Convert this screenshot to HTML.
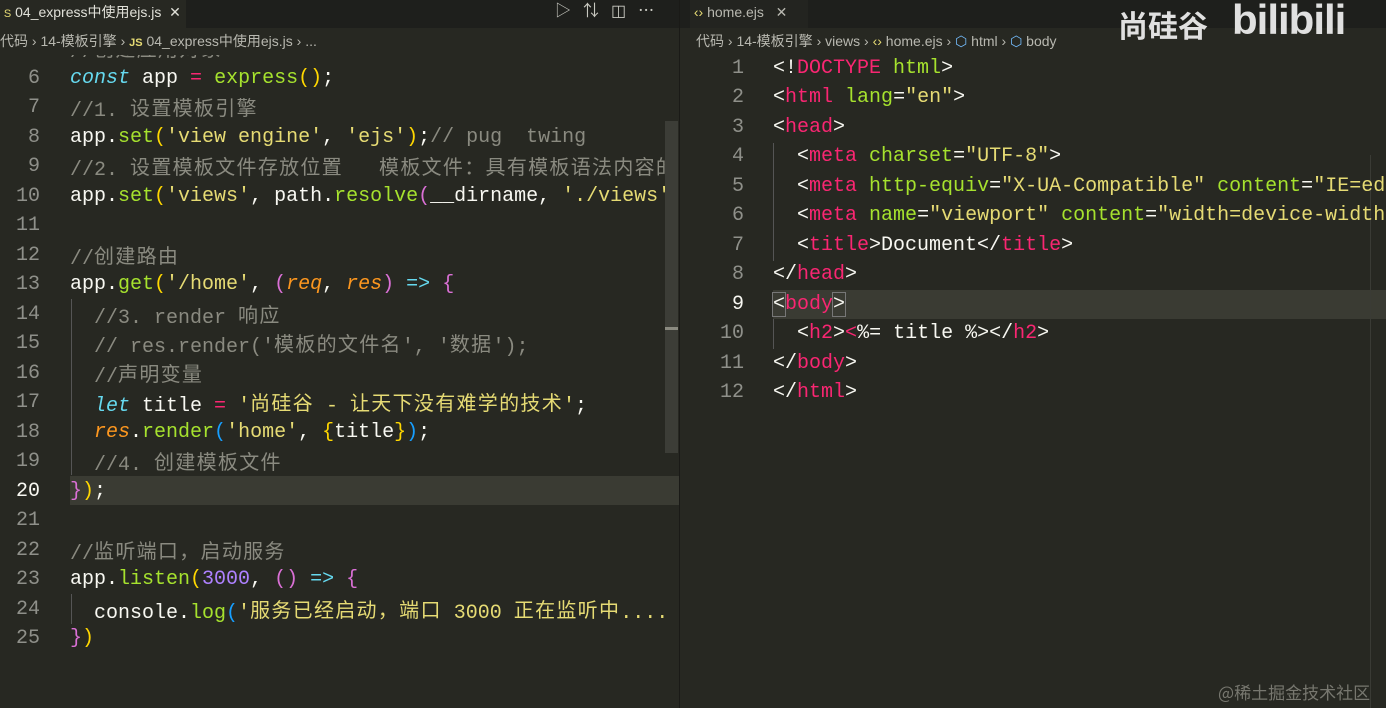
<!DOCTYPE html>
<html><head><meta charset="utf-8"><style>
body{margin:0;width:1386px;height:708px;background:#272822;overflow:hidden;position:relative;font-family:"Liberation Mono","Noto Sans CJK SC",monospace;}
.tabbar{position:absolute;left:0;top:0;width:1386px;height:28px;background:#1e1f1c;}
.tab{position:absolute;top:0;height:28px;font:14px "Liberation Sans","Noto Sans CJK SC",sans-serif;line-height:24px;color:#e0e0d8;white-space:nowrap;overflow:hidden;}
.bc{position:absolute;top:28px;height:27px;font:14px "Liberation Sans","Noto Sans CJK SC",sans-serif;line-height:27px;color:#b8b8b0;white-space:nowrap;}
.pane{position:absolute;top:55px;bottom:0;overflow:hidden;}
.ln{position:absolute;height:29.47px;line-height:29.47px;font-size:20px;white-space:pre;color:#f8f8f2;}
.num{position:absolute;width:40px;text-align:right;height:29.47px;line-height:29.47px;font-size:20px;color:#8f908a;}
.c{font-family:"Noto Sans CJK SC",sans-serif;font-size:20px;letter-spacing:1.3px;position:relative;top:-1px;}
.k{color:#66d9ef;font-style:italic}.f{color:#a6e22e}.s{color:#e6db74}.o{color:#f92672}.m{color:#8a8a80}.p{color:#fd971f;font-style:italic}.n{color:#ae81ff}
.y{color:#ffd700}.v{color:#da70d6}.b{color:#179fff}.t{color:#f92672}.a{color:#a6e22e}
.hl{position:absolute;height:29px;background:#3a3b33;}
</style></head><body>
<div class="tabbar"></div>
<div class="tab" style="left:0;width:186px;background:#272822;">&nbsp;<span style="color:#e6db74;font-size:11px">S</span> 04_express中使用ejs.js &nbsp;✕</div>
<div class="tab" style="left:555px;color:#c8c8c0;font-size:16px;letter-spacing:12px">▷⇅◫⋯</div>
<div class="tab" style="left:690px;width:118px;background:#232420;color:#b8b8b0">&nbsp;<span style="color:#e6db74">‹›</span> home.ejs &nbsp;&nbsp;✕</div>
<div style="position:absolute;left:1118px;top:2px;font:bold 30px 'Noto Sans CJK SC',sans-serif;color:#e0e0e0;">尚硅谷</div>
<div style="position:absolute;left:1232px;top:-4px;font:bold 42px 'Liberation Sans',sans-serif;color:#e0e0e0;letter-spacing:-1px">bilibili</div>
<div class="bc" style="left:0">代码 › 14-模板引擎 › <span style="color:#e6db74;font-size:11px;font-weight:bold">JS</span> 04_express中使用ejs.js › ...</div>
<div class="bc" style="left:696px">代码 › 14-模板引擎 › views › <span style="color:#e6db74">‹›</span> home.ejs › <span style="color:#75beff">⬡</span> html › <span style="color:#75beff">⬡</span> body</div>
<div style="position:absolute;left:679px;top:0;width:1px;height:708px;background:#1a1a17"></div>

<div class="pane" style="left:0;width:679px;">
<div class="hl" style="left:70px;top:421px;width:609px"></div>
<div style="position:absolute;left:665px;top:66px;width:13px;height:332px;background:#3c3d37"></div>
<div style="position:absolute;left:665px;top:272px;width:13px;height:3px;background:#8a8a80"></div>
<div style="position:absolute;left:71px;top:244px;width:1px;height:176px;background:#555"></div>
<div style="position:absolute;left:71px;top:539px;width:1px;height:30px;background:#555"></div>
</div>
<div class="pane" style="left:0;width:665px;">
<div class="num" style="top:-21px">5</div><div class="ln m" style="left:70px;top:-21px">//<span class="c">创建应用对象</span></div>
<div class="num" style="top:8.5px">6</div><div class="ln" style="left:70px;top:8.5px"><span class="k">const</span> app <span class="o">=</span> <span class="f">express</span><span class="y">()</span>;</div>
<div class="num" style="top:38px">7</div><div class="ln m" style="left:70px;top:38px">//1. <span class="c">设置模板引擎</span></div>
<div class="num" style="top:67.5px">8</div><div class="ln" style="left:70px;top:67.5px">app.<span class="f">set</span><span class="y">(</span><span class="s">'view engine'</span>, <span class="s">'ejs'</span><span class="y">)</span>;<span class="m">// pug  twing</span></div>
<div class="num" style="top:97px">9</div><div class="ln m" style="left:70px;top:97px">//2. <span class="c">设置模板文件存放位置</span>   <span class="c">模板文件：具有模板语法内容的</span></div>
<div class="num" style="top:126.5px">10</div><div class="ln" style="left:70px;top:126.5px">app.<span class="f">set</span><span class="y">(</span><span class="s">'views'</span>, path.<span class="f">resolve</span><span class="v">(</span>__dirname, <span class="s">'./views'</span><span class="v">)</span><span class="y">)</span>;</div>
<div class="num" style="top:156px">11</div>
<div class="num" style="top:185.5px">12</div><div class="ln m" style="left:70px;top:185.5px">//<span class="c">创建路由</span></div>
<div class="num" style="top:215px">13</div><div class="ln" style="left:70px;top:215px">app.<span class="f">get</span><span class="y">(</span><span class="s">'/home'</span>, <span class="v">(</span><span class="p">req</span>, <span class="p">res</span><span class="v">)</span> <span class="k" style="font-style:normal">=&gt;</span> <span class="v">{</span></div>
<div class="num" style="top:244.5px">14</div><div class="ln m" style="left:94px;top:244.5px">//3. render <span class="c">响应</span></div>
<div class="num" style="top:274px">15</div><div class="ln m" style="left:94px;top:274px">// res.render('<span class="c">模板的文件名</span>', '<span class="c">数据</span>');</div>
<div class="num" style="top:303.5px">16</div><div class="ln m" style="left:94px;top:303.5px">//<span class="c">声明变量</span></div>
<div class="num" style="top:333px">17</div><div class="ln" style="left:94px;top:333px"><span class="k">let</span> title <span class="o">=</span> <span class="s">'<span class="c">尚硅谷</span> - <span class="c">让天下没有难学的技术</span>'</span>;</div>
<div class="num" style="top:362.5px">18</div><div class="ln" style="left:94px;top:362.5px"><span class="p">res</span>.<span class="f">render</span><span class="b">(</span><span class="s">'home'</span>, <span class="y">{</span>title<span class="y">}</span><span class="b">)</span>;</div>
<div class="num" style="top:392px">19</div><div class="ln m" style="left:94px;top:392px">//4. <span class="c">创建模板文件</span></div>
<div class="num" style="top:421.5px;color:#f8f8f2">20</div><div class="ln" style="left:70px;top:421.5px"><span class="v">}</span><span class="y">)</span>;</div>
<div class="num" style="top:451px">21</div>
<div class="num" style="top:480.5px">22</div><div class="ln m" style="left:70px;top:480.5px">//<span class="c">监听端口，启动服务</span></div>
<div class="num" style="top:510px">23</div><div class="ln" style="left:70px;top:510px">app.<span class="f">listen</span><span class="y">(</span><span class="n">3000</span>, <span class="v">()</span> <span class="k" style="font-style:normal">=&gt;</span> <span class="v">{</span></div>
<div class="num" style="top:539.5px">24</div><div class="ln" style="left:94px;top:539.5px">console.<span class="f">log</span><span class="b">(</span><span class="s">'<span class="c">服务已经启动，端口</span> 3000 <span class="c">正在监听中</span>....</span></div>
<div class="num" style="top:569px">25</div><div class="ln" style="left:70px;top:569px"><span class="v">}</span><span class="y">)</span></div>
</div>

<div class="pane" style="left:680px;width:706px;">
<div class="hl" style="left:93px;top:234.5px;width:613px"></div>
<div style="position:absolute;left:93px;top:88px;width:1px;height:118px;background:#555"></div>
<div style="position:absolute;left:93px;top:264px;width:1px;height:30px;background:#555"></div>
<div style="position:absolute;left:690px;top:100px;width:1px;height:560px;background:#3a3b35"></div>
</div>
<div class="pane" style="left:680px;width:706px;">
<div class="num" style="left:24px;top:-1.5px">1</div><div class="ln" style="left:93px;top:-1.5px">&lt;!<span class="t">DOCTYPE</span> <span class="a">html</span>&gt;</div>
<div class="num" style="left:24px;top:28px">2</div><div class="ln" style="left:93px;top:28px">&lt;<span class="t">html</span> <span class="a">lang</span>=<span class="s">"en"</span>&gt;</div>
<div class="num" style="left:24px;top:57.5px">3</div><div class="ln" style="left:93px;top:57.5px">&lt;<span class="t">head</span>&gt;</div>
<div class="num" style="left:24px;top:87px">4</div><div class="ln" style="left:117px;top:87px">&lt;<span class="t">meta</span> <span class="a">charset</span>=<span class="s">"UTF-8"</span>&gt;</div>
<div class="num" style="left:24px;top:116.5px">5</div><div class="ln" style="left:117px;top:116.5px">&lt;<span class="t">meta</span> <span class="a">http-equiv</span>=<span class="s">"X-UA-Compatible"</span> <span class="a">content</span>=<span class="s">"IE=edge"</span>&gt;</div>
<div class="num" style="left:24px;top:146px">6</div><div class="ln" style="left:117px;top:146px">&lt;<span class="t">meta</span> <span class="a">name</span>=<span class="s">"viewport"</span> <span class="a">content</span>=<span class="s">"width=device-width"</span></div>
<div class="num" style="left:24px;top:175.5px">7</div><div class="ln" style="left:117px;top:175.5px">&lt;<span class="t">title</span>&gt;Document&lt;/<span class="t">title</span>&gt;</div>
<div class="num" style="left:24px;top:205px">8</div><div class="ln" style="left:93px;top:205px">&lt;/<span class="t">head</span>&gt;</div>
<div class="num" style="left:24px;top:234.5px;color:#f8f8f2">9</div><div class="ln" style="left:93px;top:234.5px"><span style="outline:1px solid #777">&lt;</span><span class="t">body</span><span style="outline:1px solid #777">&gt;</span></div>
<div class="num" style="left:24px;top:264px">10</div><div class="ln" style="left:117px;top:264px">&lt;<span class="t">h2</span>&gt;<span class="t">&lt;</span>%= title %&gt;&lt;/<span class="t">h2</span>&gt;</div>
<div class="num" style="left:24px;top:293.5px">11</div><div class="ln" style="left:93px;top:293.5px">&lt;/<span class="t">body</span>&gt;</div>
<div class="num" style="left:24px;top:323px">12</div><div class="ln" style="left:93px;top:323px">&lt;/<span class="t">html</span>&gt;</div>
</div>
<div style="position:absolute;left:1218px;top:679px;font:17px 'Noto Sans CJK SC',sans-serif;color:#77776f;">@稀土掘金技术社区</div>
</body></html>
